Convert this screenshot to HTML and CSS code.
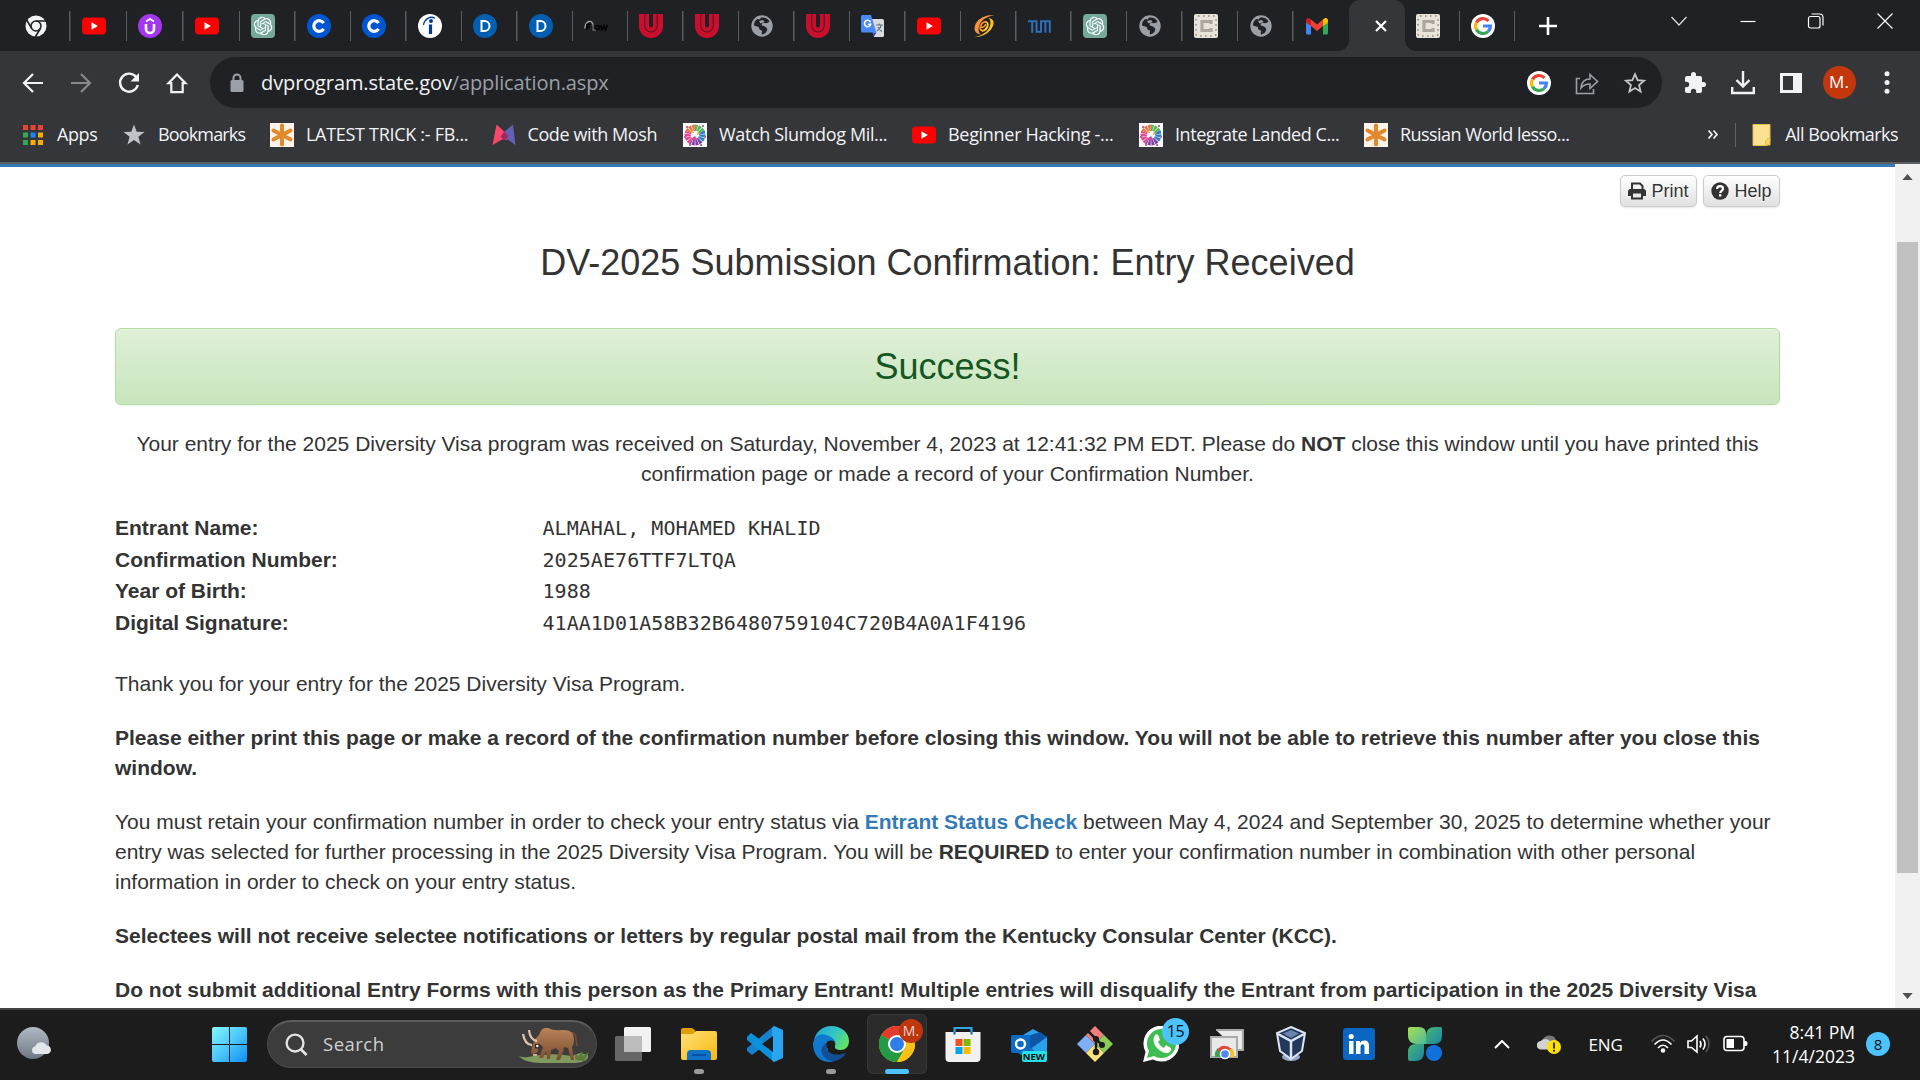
FILE: index.html
```html
<!DOCTYPE html>
<html lang="en">
<head>
<meta charset="utf-8">
<title>DV-2025 Submission Confirmation</title>
<link rel="stylesheet" href="styles.css">
</head>
<body>
<svg class="defs" width="0" height="0" aria-hidden="true">
  <defs>
    <linearGradient id="gWin" x1="0" y1="0" x2="1" y2="1"><stop offset="0" stop-color="#84f7ff"/><stop offset=".5" stop-color="#4cc7fb"/><stop offset="1" stop-color="#0f8ff5"/></linearGradient>
    <linearGradient id="gFold" x1="0" y1="0" x2="1" y2="1"><stop offset="0" stop-color="#ffdf7c"/><stop offset="1" stop-color="#f9b90c"/></linearGradient>
    <linearGradient id="gEdge" x1="0" y1="0" x2="1" y2=".5"><stop offset="0" stop-color="#1fa0dc"/><stop offset=".6" stop-color="#35c5c4"/><stop offset="1" stop-color="#5fe06a"/></linearGradient>
    <linearGradient id="gLeaf" x1="0" y1="0" x2="1" y2="1"><stop offset="0" stop-color="#a6e350"/><stop offset="1" stop-color="#4fb89c"/></linearGradient>
    <linearGradient id="gLeaf2" x1="0" y1="0" x2="1" y2="1"><stop offset="0" stop-color="#44b873"/><stop offset="1" stop-color="#1f83a5"/></linearGradient>
    <linearGradient id="gMoon" x1="0" y1="0" x2="0" y2="1"><stop offset="0" stop-color="#b0bac6"/><stop offset="1" stop-color="#6f7882"/></linearGradient>
    <linearGradient id="gBull" x1="0" y1="0" x2="0" y2="1"><stop offset="0" stop-color="#b9835a"/><stop offset="1" stop-color="#7c4c2e"/></linearGradient>
    <linearGradient id="gSwirl" x1="0" y1="0" x2="1" y2="0"><stop offset="0" stop-color="#ee7a35"/><stop offset="1" stop-color="#ffd21f"/></linearGradient>
  </defs>
  <symbol id="youtube" viewBox="0 0 24 24"><rect y="3.5" width="24" height="17" rx="4" fill="#f00"/><path d="M9.5 8.3v7.4l6.4-3.7z" fill="#fff"/></symbol>
  <symbol id="chromemono" viewBox="0 0 24 24"><circle cx="12" cy="12" r="10.500" fill="#f1f3f4"/><circle cx="12" cy="12" r="5" fill="none" stroke="#202124" stroke-width="1.500"/><path d="M12 7h10M7.700 14.500l-5-8.500M16.300 14.500l-5 8.500" stroke="#202124" stroke-width="1.600"/></symbol>
  <symbol id="udemy" viewBox="0 0 24 24"><circle cx="12" cy="12" r="12" fill="#a435f0"/><path d="M8 10v5a4 4 0 0 0 8 0v-5" fill="none" stroke="#fff" stroke-width="2.600"/><path d="M8 7.500l4-2.600 4 2.600" fill="none" stroke="#fff" stroke-width="1.800"/></symbol>
  <symbol id="gpt" viewBox="0 0 24 24"><rect width="24" height="24" rx="4" fill="#75a99c"/><path transform="translate(2.800 2.700) scale(.77)" fill="#fff" d="M22.2819 9.8211a5.9847 5.9847 0 0 0-.5157-4.9108 6.0462 6.0462 0 0 0-6.5098-2.9A6.0651 6.0651 0 0 0 4.9807 4.1818a5.9847 5.9847 0 0 0-3.9977 2.9 6.0462 6.0462 0 0 0 .7427 7.0966 5.98 5.98 0 0 0 .511 4.9107 6.051 6.051 0 0 0 6.5146 2.9001A5.9847 5.9847 0 0 0 13.2599 24a6.0557 6.0557 0 0 0 5.7718-4.2058 5.9894 5.9894 0 0 0 3.9977-2.9001 6.0557 6.0557 0 0 0-.7475-7.0729zm-9.022 12.6081a4.4755 4.4755 0 0 1-2.8764-1.0408l.1419-.0804 4.7783-2.7582a.7948.7948 0 0 0 .3927-.6813v-6.7369l2.02 1.1686a.071.071 0 0 1 .038.052v5.5826a4.504 4.504 0 0 1-4.4945 4.4944zm-9.6607-4.1254a4.4708 4.4708 0 0 1-.5346-3.0137l.142.0852 4.783 2.7582a.7712.7712 0 0 0 .7806 0l5.8428-3.3685v2.3324a.0804.0804 0 0 1-.0332.0615L9.74 19.9502a4.4992 4.4992 0 0 1-6.1408-1.6464zM2.3408 7.8956a4.485 4.485 0 0 1 2.3655-1.9728V11.6a.7664.7664 0 0 0 .3879.6765l5.8144 3.3543-2.0201 1.1685a.0757.0757 0 0 1-.071 0l-4.8303-2.7865A4.504 4.504 0 0 1 2.3408 7.872zm16.5963 3.8558L13.1038 8.364 15.1192 7.2a.0757.0757 0 0 1 .071 0l4.8303 2.7913a4.4944 4.4944 0 0 1-.6765 8.1042v-5.6772a.79.79 0 0 0-.407-.667zm2.0107-3.0231l-.142-.0852-4.7735-2.7818a.7759.7759 0 0 0-.7854 0L9.409 9.2297V6.8974a.0662.0662 0 0 1 .0284-.0615l4.8303-2.7866a4.4992 4.4992 0 0 1 6.6802 4.66zM8.3065 12.863l-2.02-1.1638a.0804.0804 0 0 1-.038-.0567V6.0742a4.4992 4.4992 0 0 1 7.3757-3.4537l-.142.0805L8.704 5.459a.7948.7948 0 0 0-.3927.6813zm1.0976-2.3654l2.602-1.4998 2.6069 1.4998v2.9994l-2.5974 1.4997-2.6067-1.4997Z"/></symbol>
  <symbol id="coursera" viewBox="0 0 24 24"><circle cx="12" cy="12" r="12" fill="#0056d2"/><path d="M16.600 9.200a5.300 5.300 0 1 0 0 5.600" fill="none" stroke="#fff" stroke-width="3.200"/></symbol>
  <symbol id="indeed" viewBox="0 0 24 24"><circle cx="12" cy="12" r="12" fill="#fff"/><path d="M12.500 10.500V20" stroke="#003a9b" stroke-width="3.200"/><circle cx="13" cy="7" r="2" fill="#003a9b"/><path d="M5.500 11C6.500 5 12 1.500 17 4.300" fill="none" stroke="#003a9b" stroke-width="1.300"/></symbol>
  <symbol id="dcircle" viewBox="0 0 24 24"><circle cx="12" cy="12" r="12" fill="#005fb0"/><path d="M8.500 7h3a5 5 0 0 1 0 10h-3z" fill="none" stroke="#fff" stroke-width="2"/></symbol>
  <symbol id="flow" viewBox="0 0 24 24"><path d="M.8 14.500C1.500 6 8.500 5 9 11.500" fill="none" stroke="#b5b5b5" stroke-width="1.200"/><path d="M3 16v-5.500h3.500M3 13h3" stroke="#050505" fill="none" stroke-width="1.600"/><path d="M9 9.500v6.500h3" stroke="#666" fill="none" stroke-width="1.300"/><circle cx="13.500" cy="13.500" r="2" fill="none" stroke="#050505" stroke-width="1.600"/><path d="M16.500 11l1.500 5 2-4.500 1.500 4.500 2-5" fill="none" stroke="#050505" stroke-width="1.600"/></symbol>
  <symbol id="ured" viewBox="0 0 24 24"><path d="M0 0h10v11.500a2 2 0 0 0 4 0V0h10v12a12 12 0 0 1-24 0z" fill="#c8102e"/><path d="M5.800 0v11.800a6.200 6.200 0 0 0 12.400 0V0" fill="none" stroke="#5d1220" stroke-width="1.100"/></symbol>
  <symbol id="globe" viewBox="0 0 24 24"><circle cx="12" cy="12" r="10.700" fill="#9aa0a6"/><path d="M11 3.600q6-.8 8.500 4-2 2.400-6 1.200-2.500.8-1.700 2.700 4.200.5 5.500 3.500-.5 4.500-5.300 5.500-.8-1.500.3-3.500l-3-1.700-.5-2.300-4.800-1.500q0-5 3.600-6.500l2.200.6z" fill="#202124"/><path d="M9 7l4-1 1.500 2-4 1.500z" fill="#9aa0a6"/></symbol>
  <symbol id="translate" viewBox="0 0 24 24"><path d="M10 5h11.500q1.500 0 1.500 1.500v15q0 1.500-1.500 1.500H13z" fill="#d8dbe0"/><path d="M11 18.500h4.500L13 22.500z" fill="#3a45c0"/><path d="M1.500 1H10l5.500 17.500h-14Q0 18.500 0 17V2.500Q0 1 1.500 1z" fill="#4a8af4"/><path d="M9.600 8.200a3.200 3.200 0 1 0 .2 2H7" fill="none" stroke="#fff" stroke-width="1.500"/><path d="M15 11h7M18.300 9.500V11m2 0q-1 4-4.300 6m1-4q1.500 3 4 4.500" fill="none" stroke="#65727e" stroke-width="1.200"/></symbol>
  <symbol id="swirl" viewBox="0 0 24 24"><path d="M22.500 1Q9 .5 3.800 9.500C1 15.500 3 20 8.500 20.200 4.800 17 7 9 11.500 5.500 15 3 18 2 22.500 1z" fill="#f4943a"/><path d="M1.500 23.200Q13 23 19 15.500c4.500-6 3-11-2.500-11.500 3.500 3 2 10-2 13.500-3.500 3-8 5-13 5.700z" fill="#ffbf1f"/><ellipse cx="12" cy="12.200" rx="3.200" ry="4.800" transform="rotate(32 12 12.200)" fill="#202124" stroke="url(#gSwirl)" stroke-width="2"/><path d="M9 13q3 1 5-3" fill="none" stroke="#f7a52c" stroke-width="1.600"/></symbol>
  <symbol id="tum" viewBox="0 0 24 24"><path d="M0 7.200h8.500v10.600h4.500V7.200h8.800v11.600M4.200 7v11.800M17.400 7v11.800" fill="none" stroke="#2f6fb7" stroke-width="2"/></symbol>
  <symbol id="crystal" viewBox="0 0 24 24"><rect width="24" height="24" rx="2" fill="#e9e4da"/><rect x="2" y="2" width="20" height="20" rx="2" fill="none" stroke="#918b80" stroke-width="1.600" stroke-dasharray="1.600 3.400"/><path d="M17 10V7.500H8v9h9V14" fill="none" stroke="#aca79d" stroke-width="3.200"/></symbol>
  <symbol id="gmail" viewBox="0 0 24 24"><path d="M1 6v13q0 1.500 1.500 1.500H6V10z" fill="#4285f4"/><path d="M23 6v13q0 1.500-1.500 1.500H18V10z" fill="#34a853"/><path d="M6 5.500l6 5 6-5V12l-6 5-6-5z" fill="#ea4335"/><path d="M1 6.500C1 3.500 4 3 6 5.500V12L1 8.500z" fill="#c5221f"/><path d="M23 6.500c0-3-3-3.500-5-1V12l5-3.500z" fill="#fbbc04"/></symbol>
  <symbol id="google" viewBox="0 0 24 24"><circle cx="12" cy="12" r="12" fill="#fff"/><g fill="none" stroke-width="3.200"><path d="M5.400 8.500A7.500 7.500 0 0 1 17.500 6.900" stroke="#ea4335"/><path d="M5.400 15.500a7.500 7.500 0 0 1 0-7" stroke="#fbbc05"/><path d="M17 17.600A7.500 7.500 0 0 1 5.400 15.500" stroke="#34a853"/><path d="M12 12h7.500a7.500 7.500 0 0 1-2.500 5.600" stroke="#4285f4"/></g></symbol>
  <symbol id="asterisk" viewBox="0 0 24 24"><rect width="24" height="24" fill="#fdf3e8"/><path d="M12 2.500v19M3.500 7.500l17 9M20.500 7.500l-17 9" stroke="#e2892c" stroke-width="4" stroke-linecap="round"/></symbol>
  <symbol id="mosh" viewBox="0 0 24 24"><path d="M4.500 1.500L15 11v6l-4-1L.5 22z" fill="#f7476b"/><path d="M21 1.500L11 10v7l4-1 8.500 6z" fill="#6361b5"/><path d="M12.500 8.500l4 5-4 4-4-4z" fill="#a02a5e"/></symbol>
  <symbol id="splash" viewBox="0 0 24 24"><rect width="24" height="24" fill="#fff"/><g fill="none" stroke-width="6.500" stroke-dasharray="2.300 .5"><path d="M5.500 9A7.200 7.200 0 0 1 12 4.800" stroke="#ee7445"/><path d="M12 4.800a7.200 7.200 0 0 1 6.500 4" stroke="#5bb65b"/><path d="M18.500 8.800A7.200 7.200 0 0 1 17 17.200" stroke="#2d80c8"/><path d="M17 17.200A7.200 7.200 0 0 1 8 18" stroke="#8241a2"/><path d="M8 18a7.200 7.200 0 0 1-2.500-9" stroke="#e7418f"/></g><path d="M9 8l3 1 3-1-1 3 3 2-4 .5-1 3-1.500-3.500-3 1.500z" fill="#fff"/><path d="M7 9l3-2 1 3zM15 8l2 3-3 1z" fill="#e9a13b"/><path d="M9 15l3-2 2 3-3 2z" fill="#c94a9f"/><path d="M3 3h2v2H3zm16-1h2v2h-2zM1 13h2v2H1zm20 0h2v2h-2zM6 21h2v2H6zm11 0h2v2h-2z" fill="#c569a4"/></symbol>
  <symbol id="chrome" viewBox="0 0 36 36"><circle cx="18" cy="18" r="18" fill="#fbc116"/><path d="M18 18L2.400 9A18 18 0 0 1 33.600 9z" fill="#e33b2e"/><path d="M18 18L2.400 9A18 18 0 0 0 18 36l7.800-13.500z" fill="#229a46"/><path d="M18 9h15.600a18 18 0 0 1-15.600 27l8-14z" fill="#fbc116"/><circle cx="18" cy="18" r="9" fill="#fff"/><circle cx="18" cy="18" r="7" fill="#2f7de9"/></symbol>
</svg>

<header class="browser">
  <div class="tabstrip">
    <div class="tabs">
      <div class="tab first"><svg><use href="#chromemono"/></svg></div>
      <div class="tab"><svg><use href="#youtube"/></svg></div>
      <div class="tab"><svg><use href="#udemy"/></svg></div>
      <div class="tab"><svg><use href="#youtube"/></svg></div>
      <div class="tab"><svg><use href="#gpt"/></svg></div>
      <div class="tab"><svg><use href="#coursera"/></svg></div>
      <div class="tab"><svg><use href="#coursera"/></svg></div>
      <div class="tab"><svg><use href="#indeed"/></svg></div>
      <div class="tab"><svg><use href="#dcircle"/></svg></div>
      <div class="tab"><svg><use href="#dcircle"/></svg></div>
      <div class="tab"><svg><use href="#flow"/></svg></div>
      <div class="tab"><svg><use href="#ured"/></svg></div>
      <div class="tab"><svg><use href="#ured"/></svg></div>
      <div class="tab"><svg><use href="#globe"/></svg></div>
      <div class="tab"><svg><use href="#ured"/></svg></div>
      <div class="tab"><svg><use href="#translate"/></svg></div>
      <div class="tab"><svg><use href="#youtube"/></svg></div>
      <div class="tab"><svg><use href="#swirl"/></svg></div>
      <div class="tab"><svg><use href="#tum"/></svg></div>
      <div class="tab"><svg><use href="#gpt"/></svg></div>
      <div class="tab"><svg><use href="#globe"/></svg></div>
      <div class="tab"><svg><use href="#crystal"/></svg></div>
      <div class="tab"><svg><use href="#globe"/></svg></div>
      <div class="tab before"><svg><use href="#gmail"/></svg></div>
      <div class="tab active"><svg viewBox="0 0 24 24"><path d="M7 7l10 10M17 7L7 17" stroke="#fff" stroke-width="2.200"/></svg></div>
      <div class="tab"><svg><use href="#crystal"/></svg></div>
      <div class="tab"><svg><use href="#google"/></svg></div>
    </div>
    <svg class="newtab" viewBox="0 0 24 24"><path d="M12 3v18M3 12h18" stroke="#fff" stroke-width="2.600"/></svg>
    <div class="winctl">
      <svg viewBox="0 0 24 24"><path d="M4.500 8l7.500 8 7.500-8" fill="none" stroke="#ddd" stroke-width="1.200"/></svg>
      <svg viewBox="0 0 24 24"><path d="M4.500 12.500h15" stroke="#fff" stroke-width="1.200"/></svg>
      <svg viewBox="0 0 24 24"><rect x="4.500" y="7.500" width="11.500" height="11.500" rx="2" fill="none" stroke="#fff" stroke-width="1.200"/><path d="M7.500 5h8q3.500 0 3.500 3.500v8" fill="none" stroke="#fff" stroke-width="1.200"/></svg>
      <svg viewBox="0 0 24 24"><path d="M4.500 4.500l15 15M19.500 4.500l-15 15" stroke="#fff" stroke-width="1.200"/></svg>
    </div>
  </div>
  <div class="toolbar">
    <div class="nav">
      <svg viewBox="0 0 24 24"><path d="M22 12H3.500M12 3l-9 9 9 9" fill="none" stroke="#f1f3f4" stroke-width="2.200"/></svg>
      <svg viewBox="0 0 24 24"><path d="M2 12h18.500M12 3l9 9-9 9" fill="none" stroke="#87898d" stroke-width="2.200"/></svg>
      <svg viewBox="0 0 24 24"><path d="M19.500 6.500A9 9 0 1 0 20.800 14" fill="none" stroke="#f1f3f4" stroke-width="2.400"/><path d="M22 2v8.500h-8.500z" fill="#f1f3f4"/></svg>
      <svg viewBox="0 0 24 24"><path d="M12 3.500l-8.500 8.700h2.800v9h11.400v-9h2.800z" fill="none" stroke="#f1f3f4" stroke-width="2.200"/></svg>
    </div>
    <div class="omnibox">
      <svg class="lock" viewBox="0 0 16 20"><rect x="1.500" y="7" width="13" height="12" rx="1.500" fill="#9aa0a6"/><path d="M4.500 8V5a3.500 3.500 0 0 1 7 0v3" fill="none" stroke="#9aa0a6" stroke-width="2"/></svg>
      <div class="url">dvprogram.state.gov<span>/application.aspx</span></div>
      <div class="omniicons">
        <svg><use href="#google"/></svg>
        <svg viewBox="0 0 24 24"><path d="M5 7.500H1.500v15h17v-4.500" fill="none" stroke="#9aa0a6" stroke-width="1.600"/><path d="M6 17c.5-6 4-9 9-9V3.500l7.500 7-7.500 7V13c-4 0-6.500 1-9 4z" fill="none" stroke="#9aa0a6" stroke-width="1.600"/></svg>
        <svg viewBox="0 0 24 24"><path d="M12 3.200l2.600 6 6.500.6-5 4.300 1.500 6.400L12 17.100l-5.600 3.400L7.900 14.100l-5-4.300 6.500-.6z" fill="none" stroke="#c4c7cb" stroke-width="1.800"/></svg>
      </div>
    </div>
    <div class="actions">
      <svg viewBox="0 0 24 24"><path d="M20.500 11H19V7a2 2 0 0 0-2-2h-4V3.500a2.500 2.500 0 0 0-5 0V5H4a2 2 0 0 0-2 2v3.800h1.500a2.700 2.700 0 0 1 0 5.400H2V20a2 2 0 0 0 2 2h3.800v-1.500a2.700 2.700 0 0 1 5.400 0V22H17a2 2 0 0 0 2-2v-4h1.500a2.500 2.500 0 0 0 0-5z" fill="#f1f3f4"/></svg>
      <svg viewBox="0 0 24 24"><path d="M12 0v15M5.500 9l6.500 6.500L18.500 9M1.200 16v6h21.600v-6" fill="none" stroke="#f1f3f4" stroke-width="2.400"/></svg>
      <svg viewBox="0 0 24 24"><path d="M1 2h22v20H1zM4 5v14h10V5z" fill="#f1f3f4" fill-rule="evenodd"/></svg>
      <span class="avatar">M.</span>
      <svg viewBox="0 0 24 24"><g fill="#f1f3f4"><circle cx="12" cy="2.800" r="2.500"/><circle cx="12" cy="11.500" r="2.500"/><circle cx="12" cy="20.200" r="2.500"/></g></svg>
    </div>
  </div>
  <div class="bookmarks">
    <div class="bm apps"><svg viewBox="0 0 24 24"><path d="M2 2h5v5H2zm7.500 0h5v5h-5zM17 2h5v5h-5z" fill="#ea4335"/><path d="M2 9.500h5v5H2zM2 17h5v5H2z" fill="#34a853"/><path d="M9.500 9.500h5v5h-5z" fill="#1a85ff"/><path d="M17 9.500h5v5h-5zM9.500 17h5v5h-5zM17 17h5v5h-5z" fill="#fbab05"/></svg><span>Apps</span></div>
    <div class="bm marks"><svg viewBox="0 0 24 24"><path d="M12 1.500l2.700 7.200 7.800.3-6.100 4.800 2.100 7.700L12 17.100l-6.500 4.400 2.100-7.700L1.500 9l7.800-.3z" fill="#bfc2c7"/></svg><span>Bookmarks</span></div>
    <div class="bm latest"><svg><use href="#asterisk"/></svg><span>LATEST TRICK :- FB...</span></div>
    <div class="bm code"><svg><use href="#mosh"/></svg><span>Code with Mosh</span></div>
    <div class="bm watch"><svg><use href="#splash"/></svg><span>Watch Slumdog Mil...</span></div>
    <div class="bm hack"><svg><use href="#youtube"/></svg><span>Beginner Hacking -...</span></div>
    <div class="bm landed"><svg><use href="#splash"/></svg><span>Integrate Landed C...</span></div>
    <div class="bm russian"><svg><use href="#asterisk"/></svg><span>Russian World lesso...</span></div>
    <div class="bm-end">
      <svg class="more" viewBox="0 0 12 12"><path d="M1.500 1.500L5 5.500 1.500 9.500M6.500 1.500L10 5.500 6.500 9.500" fill="none" stroke="#f1f3f4" stroke-width="1.700"/></svg>
      <i class="divider"></i>
      <svg class="folder" viewBox="0 0 20 24"><path d="M1 1.500h17V17l-3 5.500H1z" fill="#fde293" stroke="#e3bf4e"/><path d="M18 15.500v6.500h-4.500v-4q2 0 2-2.500z" fill="#fcd462" stroke="#e3bf4e"/></svg>
      <span>All Bookmarks</span>
    </div>
  </div>
</header>

<div class="viewport">
  <main class="page">
    <div class="container">
      <div class="buttons">
        <button class="btn"><svg viewBox="0 0 18 18"><path d="M4 8V1.500h8l2.500 2.500V8" fill="none" stroke="#333" stroke-width="2"/><path d="M0 9.500Q0 7 2.500 7h13Q18 7 18 9.500V14h-3v-2.500H3V14H0z" fill="#333"/><path d="M4 11v5.500h10V11" fill="none" stroke="#333" stroke-width="2"/></svg>Print</button>
        <button class="btn"><svg viewBox="0 0 18 18"><circle cx="9" cy="9" r="8.700" fill="#333"/><path d="M6 6.800C6.400 3.200 12 3.400 12 6.800c0 2-2.800 2-2.800 4.200" fill="none" stroke="#fff" stroke-width="2.200"/><path d="M8 12.200h2.400v2.300H8z" fill="#fff"/></svg>Help</button>
      </div>
      <h1>DV-2025 Submission Confirmation: Entry Received</h1>
      <div class="alert">Success!</div>
      <p class="lead">Your entry for the 2025 Diversity Visa program was received on Saturday, November 4, 2023 at 12:41:32 PM EDT. Please do <b>NOT</b> close this window until you have printed this<br>confirmation page or made a record of your Confirmation Number.</p>
      <dl class="details">
        <dt>Entrant Name:</dt><dd>ALMAHAL, MOHAMED KHALID</dd>
        <dt>Confirmation Number:</dt><dd>2025AE76TTF7LTQA</dd>
        <dt>Year of Birth:</dt><dd>1988</dd>
        <dt>Digital Signature:</dt><dd>41AA1D01A58B32B6480759104C720B4A0A1F4196</dd>
      </dl>
      <p>Thank you for your entry for the 2025 Diversity Visa Program.</p>
      <p><b>Please either print this page or make a record of the confirmation number before closing this window. You will not be able to retrieve this number after you close this<br>window.</b></p>
      <p>You must retain your confirmation number in order to check your entry status via <a href="#">Entrant Status Check</a> between May 4, 2024 and September 30, 2025 to determine whether your<br>entry was selected for further processing in the 2025 Diversity Visa Program. You will be <b>REQUIRED</b> to enter your confirmation number in combination with other personal<br>information in order to check on your entry status.</p>
      <p><b>Selectees will not receive selectee notifications or letters by regular postal mail from the Kentucky Consular Center (KCC).</b></p>
      <p><b>Do not submit additional Entry Forms with this person as the Primary Entrant! Multiple entries will disqualify the Entrant from participation in the 2025 Diversity Visa</b></p>
    </div>
  </main>
  <aside class="scrollbar">
    <svg viewBox="0 0 12 7"><path d="M0 7l6-7 6 7z" fill="#505050"/></svg>
    <div class="thumb"></div>
    <svg class="down" viewBox="0 0 12 7"><path d="M0 0l6 7 6-7z" fill="#505050"/></svg>
  </aside>
</div>

<footer class="taskbar">
  <svg class="weather" viewBox="0 0 36 36"><circle cx="17" cy="17" r="16" fill="url(#gMoon)"/><path d="M19 28a4 4 0 0 1 .5-7.800 6 6 0 0 1 11-.7A4.300 4.300 0 0 1 31.500 28z" fill="#e3e7ec"/></svg>
  <svg class="start" viewBox="0 0 35 35"><path d="M2 0h15v17H0V2q0-2 2-2zM18 0h15q2 0 2 2v15H18zM0 18h17v17H2q-2 0-2-2zM18 18h17v15q0 2-2 2H18z" fill="url(#gWin)"/></svg>
  <div class="search">
    <svg class="lens" viewBox="0 0 24 24"><circle cx="10.500" cy="10.500" r="8.800" fill="none" stroke="#e4e4e4" stroke-width="2.400"/><path d="M16.500 17l6 6" stroke="#e4e4e4" stroke-width="2.800"/></svg>
    <span>Search</span>
    <svg class="bull" viewBox="0 0 70 36">
      <path d="M0 29q5 2 9 1 22-5 44-1l8-3 8 2q1 4-4 6-4 2-12 2H22Q5 36 0 29z" fill="#7f9a5c"/>
      <path d="M56 31q1-8 3-1l4-6 1 5 6-4-5 9-8-1z" fill="#5d7c3c"/>
      <path d="M51 6q6-1 6 6l1 7" fill="none" stroke="#7a4d30" stroke-width="1.600"/>
      <path d="M20 8Q23-1 29 1q6 3 14 2 12-1 12 9 0 5-2 8l2 13h-3l-3-12-4-1-1 5-3 8h-4l3-9-3-3-5 2-1 9h-3l-1-8-3 7h-4l4-11q-3-2-4-4l-1 8q-3 5-7 2l1-6 3-8z" fill="url(#gBull)"/>
      <path d="M13 18Q6 18 4 7M18 14Q11 13 10 3" fill="none" stroke="#dcc4ae" stroke-width="2.300"/>
      <path d="M16 17h4.500v4.500H16z" fill="#332723"/><circle cx="18.300" cy="19" r="1.200" fill="#fff"/>
      <path d="M14 28h4" stroke="#dba492" stroke-width="2"/>
    </svg>
  </div>
  <div class="apps-row">
    <div class="app"><svg viewBox="0 0 36 36"><rect x="9" y="1" width="27" height="25" rx="1.500" fill="#f2f2f2"/><path d="M1.500 10H9v16h18v7.500q0 1.500-1.500 1.500h-24Q0 35 0 33.500v-22Q0 10 1.500 10z" fill="#666"/><path d="M9 10h18v16H9z" fill="#bcbcbc"/></svg></div>
    <div class="app running"><svg viewBox="0 0 36 36"><path d="M0 4q0-2 2-2h9l4 3h-1v8H0z" fill="#e09f04"/><path d="M0 8h12l3-3h19q2 0 2 2v25q0 2-2 2H2q-2 0-2-2z" fill="url(#gFold)"/><path d="M6 34V28q0-4 4-4h16q4 0 4 4v6z" fill="#0f72ca"/><path d="M11 29h14" stroke="#0a4f97" stroke-width="2"/></svg></div>
    <div class="app"><svg viewBox="0 0 36 36"><path d="M27 0v12L5 29 0 25v-3z" fill="#1681cc"/><path d="M0 14v-3l4-4 23 17v12z" fill="#0b91dc"/><path d="M27 0l9 4v28l-9 4-2-2V2z" fill="#27a5f0"/><path d="M26 10v16L15 18z" fill="#1c1c1c"/></svg></div>
    <div class="app running"><svg viewBox="0 0 36 36"><path d="M1 14a17.500 17.500 0 0 1 17-14c11 0 18 7 18 15 0 6-4 9-8 9-5 0-7-2-6-4 3-9-14-14-21-6z" fill="url(#gEdge)"/><path d="M0 18C1 9 9 7 13 9c7 2 10 6 9 10-7-6-12 10 0 16-13 4-22-5-22-17z" fill="#1078cf"/><path d="M14 17c-3 7 4 15 19 10C29 34 18 39 11 31c-5-6-2-12 3-14z" fill="#144f94"/><path d="M15 15q-3 3-1 7l4 3q2 2 5 0-2-2-1-5 1-7-7-5z" fill="#1c1c1c"/></svg></div>
    <div class="app current"><svg><use href="#chrome"/></svg><span class="badge profile">M.</span></div>
    <div class="app"><svg viewBox="0 0 36 36"><path d="M9.500 8V2h17v6" fill="none" stroke="#2fa6dd" stroke-width="2.200"/><path d="M.5 6h35v26q0 4-4 4h-27q-4 0-4-4z" fill="#f1f1f1"/><path d="M10.500 13h7v7h-7z" fill="#f25022"/><path d="M18.500 13h7v7h-7z" fill="#7fba00"/><path d="M10.500 21h7v7h-7z" fill="#00a4ef"/><path d="M18.500 21h7v7h-7z" fill="#ffb900"/><path d="M9.500 6v2.500M26.500 6v2.500" stroke="#1d6fa0" stroke-width="2.200"/></svg></div>
    <div class="app"><svg viewBox="0 0 36 36"><path d="M7 12L22 3l14 8v17H11z" fill="#28a1e9"/><path d="M11 12L29 6l7 5-18 13z" fill="#0e55a8"/><path d="M7 13v14l10 6 6-9z" fill="#1b6cc0"/><rect y="9" width="19" height="18" rx="2" fill="#0b6cc6"/><circle cx="9.500" cy="18" r="4.500" fill="none" stroke="#fff" stroke-width="2.400"/><rect x="11" y="25" width="25" height="11" rx="2" fill="#25e0e4"/></svg><b class="newtag">NEW</b></div>
    <div class="app"><svg viewBox="0 0 36 36"><path d="M18 0l9 9-9 9-9-9z" fill="#f37f7d"/><path d="M9 9l9 9-9 9-9-9z" fill="#80aef7"/><path d="M27 9l9 9-9 9-9-9z" fill="#8dcb58"/><path d="M18 18l9 9-9 9-9-9z" fill="#fce07a"/><path d="M11 5l8 8v14M19 13l6 6" fill="none" stroke="#1c1c1c" stroke-width="2.500"/><g fill="#1c1c1c"><circle cx="19" cy="13" r="3"/><circle cx="19" cy="26" r="3.200"/><circle cx="25" cy="19" r="3"/></g></svg></div>
    <div class="app"><svg viewBox="0 0 36 36"><path d="M0 36l2.500-10A18 18 0 1 1 10 33.500z" fill="#fff"/><path d="M4 32l2-7a14.500 14.500 0 1 1 5 5z" fill="#3dbd52"/><path d="M12 9q3-2 4 2l1 3-2 2q2 4 6 6l2-3 5 3q1 3-3 5-5 1-11-5-6-7-2-13z" fill="#fff"/></svg><span class="badge count">15</span></div>
    <div class="app"><svg viewBox="0 0 36 36"><path d="M7 4h27v20h-6" fill="#ececec" stroke="#a7a7a7" stroke-width="2"/><rect x="2" y="11" width="26" height="20" fill="#e9e9e9" stroke="#aaa" stroke-width="2"/><path d="M6 31a9.500 9.500 0 0 1 3-9l7 9z" fill="#3aa554"/><path d="M8 24q6-8 15-1l-7 5z" fill="#df483c"/><path d="M17 24l7-1q2 4 1 8h-8z" fill="#f6c12d"/><circle cx="16" cy="28" r="4.500" fill="#4c8bef" stroke="#fff" stroke-width="1.500"/></svg></div>
    <div class="app vbox"><svg viewBox="0 0 36 36"><ellipse cx="18" cy="31" rx="9" ry="4" fill="#96a6cb"/><path d="M18 1l14 6-3 18-11 8-11-8L4 7z" fill="#23395b" stroke="#dce5f5" stroke-width="2"/><path d="M5 8l13 7 13-7M18 15v17" fill="none" stroke="#dce5f5" stroke-width="2.500"/><path d="M18 4l8 3.500L18 12l-8-4.500z" fill="#6b83ae"/></svg></div>
    <div class="app"><svg viewBox="0 0 36 36"><rect x="2" y="2" width="32" height="32" rx="3" fill="#0a66c2"/><path d="M8 15h4.500v13H8zM15 15h4v2q1-2.400 4.500-2.400 4.500 0 4.500 5.400v8h-4.500v-7.300q0-2.400-1.900-2.400-2.100 0-2.100 2.600V28H15z" fill="#fff"/><circle cx="10.200" cy="10.500" r="2.600" fill="#fff"/></svg></div>
    <div class="app"><svg viewBox="0 0 36 36"><path d="M1 3q0-2 2-2h9q7 0 7 7v10H9q-8-1-8-8z" fill="url(#gLeaf)"/><path d="M19 10q0-9 9-9h6q1 0 1 2v7q0 8-8 8h-8z" fill="url(#gLeaf2)"/><path d="M1 26q0-8 8-8h8v8q0 9-9 9H3q-2 0-2-2z" fill="url(#gLeaf2)"/><circle cx="27" cy="27" r="8" fill="#1272dc"/></svg></div>
  </div>
  <div class="tray">
    <svg class="chev" viewBox="0 0 16 9"><path d="M1 8l7-7 7 7" fill="none" stroke="#fff" stroke-width="2"/></svg>
    <svg class="cloud" viewBox="0 0 24 20"><path d="M4 12a4.500 4.500 0 0 1 2-7A7 6 0 0 1 18 4q3 4 0 8z" fill="#777"/><path d="M4 15.500a4 4 0 0 1 0-8.500 6 6 0 0 1 9 0l4 8.500z" fill="#d2d2d2"/><circle cx="17" cy="13" r="7" fill="#ffe100"/><path d="M17 8.500v6M17 15.800v2" stroke="#222" stroke-width="1.800"/></svg>
    <span class="lang">ENG</span>
    <svg class="wifi" viewBox="0 0 24 20"><g fill="none" stroke="#fff" stroke-width="1.700"><path d="M.5 7.500q11.500-12 23 0" stroke="#555"/><path d="M3.500 10.500q8.500-9 17 0M7 14q5-5.500 10 0"/></g><circle cx="12" cy="16.500" r="2.300" fill="#fff"/></svg>
    <svg class="vol" viewBox="0 0 24 20"><g fill="none" stroke="#fff" stroke-width="1.600"><path d="M1 7v6.500h3.500L10 18V2L4.500 7z"/><path d="M13 7q2 3 0 6.500M16 4.500q4 5.500 0 11"/><path d="M19 2q6 8 0 16" stroke="#555"/></g></svg>
    <svg class="bat" viewBox="0 0 25 18"><rect x="1" y="1.500" width="20" height="14" rx="3" fill="none" stroke="#fff" stroke-width="1.600"/><rect x="3.500" y="4" width="7.500" height="9" fill="#fff"/><path d="M21 6h2q1.500 0 1.500 2.500T23 11h-2z" fill="#fff"/></svg>
    <div class="clock"><div>8:41 PM</div><div>11/4/2023</div></div>
    <span class="notif">8</span>
  </div>
</footer>
</body>
</html>
```
FILE: styles.css
```css
* { box-sizing: border-box; }
body {
  margin: 0;
  width: 1920px;
  height: 1080px;
  overflow: hidden;
  display: flex;
  flex-direction: column;
  background: #fff;
  font-family: "Liberation Sans", Arial, sans-serif;
}
svg { display: block; flex: none; width: 24px; height: 24px; }
.defs { position: absolute; width: 0; height: 0; }

/* Browser chrome */
.browser {
  flex: none;
  height: 164px;
  background: #35363a;
  border-bottom: 2px solid #5b5e62;
  font-family: "Open Sans", "Noto Sans", sans-serif;
  color: #f1f3f4;
}
.tabstrip { height: 51px; display: flex; background: #202124; }
.tabs { display: flex; padding-left: 15px; }
.tab {
  width: 55.45px;
  height: 51px;
  padding-left: 11px;
  display: flex;
  align-items: center;
  background: linear-gradient(#5a5c60, #5a5c60) right 11px / 1.5px 30px no-repeat;
}
.tab:nth-child(-n+4) { width: 56.6px; }
.tab.first { width: 55.6px; padding-left: 9px; }
.tab.before { background: none; }
.tab.active {
  padding-left: 20px;
  border-radius: 11px 11px 0 0;
  background: #35363a;
  position: relative;
}
.tab.active::before, .tab.active::after {
  content: "";
  position: absolute;
  bottom: 0;
  width: 10px;
  height: 10px;
}
.tab.active::before { left: -10px; background: radial-gradient(circle at 0 0, #202124 9.5px, #35363a 10px); }
.tab.active::after { right: -10px; background: radial-gradient(circle at 100% 0, #202124 9.5px, #35363a 10px); }
.newtab { margin: 14px 0 0 21px; width: 24px; height: 24px; }
.winctl { margin-left: auto; padding: 9px 23px 0 0; display: flex; gap: 44.7px; }

.toolbar { height: 63px; padding-top: 6px; display: flex; align-items: flex-start; }
.nav { width: 210px; height: 51px; padding-left: 21px; display: flex; align-items: center; gap: 24px; }
.omnibox {
  width: 1452px;
  height: 51px;
  padding: 0 15px 0 19px;
  border-radius: 26px;
  display: flex;
  align-items: center;
  background: #202124;
}
.lock { width: 16px; height: 20px; }
.url { margin: -1px 0 0 16px; font-size: 20px; letter-spacing: -.11px; }
.url span { color: #9aa0a6; }
.omniicons { margin-left: auto; display: flex; gap: 24px; }
.actions { height: 51px; margin-left: 21px; display: flex; align-items: center; gap: 24px; }
.avatar {
  width: 33px;
  height: 33px;
  margin: 0 -4.5px;
  border-radius: 50%;
  background: #c2370c;
  color: #fff;
  font-size: 17px;
  line-height: 32px;
  text-align: center;
}

.bookmarks { height: 42px; display: flex; align-items: center; font-size: 18px; }
.bm { display: flex; align-items: center; gap: 12px; white-space: nowrap; letter-spacing: -.4px; }
.bm-end span { letter-spacing: -.55px; }
.bookmarks span { margin-top: -2px; }
.bm.apps { width: 101px; padding-left: 21px; }
.bm.marks { width: 148px; margin-left: 21px; letter-spacing: -.85px; }
.bm.latest { width: 221.5px; letter-spacing: -.3px; }
.bm.code { width: 191.5px; }
.bm.watch { width: 229px; letter-spacing: -.35px; }
.bm.hack { width: 227px; letter-spacing: -.3px; }
.bm.landed { width: 225px; letter-spacing: -.45px; }
.bm.russian { width: 210px; letter-spacing: -.55px; }
.bm-end { margin-left: auto; padding-right: 22px; display: flex; align-items: center; white-space: nowrap; }
.more { width: 12px; height: 12px; }
.divider { width: 1.5px; height: 24px; margin: 0 16px 0 15.5px; background: #5f6368; }
.folder { width: 20px; height: 24px; margin-right: 13px; }

/* Page */
.viewport { flex: none; height: 844px; display: flex; overflow: hidden; }
.page { width: 1895px; height: 844px; border-top: 3px solid #337ab7; overflow: hidden; }
.container { width: 1665px; margin-left: 115px; color: #333; font-size: 21px; line-height: 30px; white-space: nowrap; }
.buttons { display: flex; justify-content: flex-end; gap: 6px; padding-top: 8px; }
.btn {
  height: 32px;
  width: 77px;
  padding: 0;
  border: 1px solid #ccc;
  border-radius: 5px;
  display: flex;
  align-items: center;
  justify-content: center;
  gap: 5px;
  background: linear-gradient(#fff, #e0e0e0);
  box-shadow: 0 1px 2px rgba(0, 0, 0, .1);
  color: #333;
  font: 18px "Liberation Sans", Arial, sans-serif;
  text-shadow: 0 1px 0 #fff;
}
.btn svg { width: 18px; height: 18px; }
h1 { margin: 36px 0 46px; font-size: 36px; line-height: 39px; font-weight: 400; text-align: center; }
.alert {
  height: 77px;
  border: 1px solid #b2dba1;
  border-radius: 6px;
  background: linear-gradient(#dff0d8, #c8e5bc);
  box-shadow: inset 0 1px 0 rgba(255, 255, 255, .25), 0 1px 2px rgba(0, 0, 0, .05);
  color: #155724;
  font-size: 36px;
  line-height: 76px;
  text-align: center;
}
p { margin: 0 0 24px; }
.lead { margin: 24px 0 24px; text-align: center; }
.details { margin: 0 0 30px; display: grid; grid-template-columns: 427.5px 1fr; grid-auto-rows: 31.5px; line-height: 31.5px; }
dt { font-weight: 700; line-height: 29.5px; }
dd { margin: 0; font-family: "DejaVu Sans Mono", monospace; font-size: 20px; letter-spacing: .05px; }
a { color: #337ab7; font-weight: 700; text-decoration: none; }

.scrollbar { width: 25px; background: #f1f1f1; display: flex; flex-direction: column; align-items: center; padding: 10px 0 9px; }
.scrollbar svg { width: 11px; height: 6px; }
.thumb { width: 21px; height: 631px; margin-top: 62px; background: #c1c1c1; }
.down { margin-top: auto; }

/* Taskbar */
.taskbar {
  flex: none;
  height: 72px;
  padding-bottom: 2px;
  border-top: 2px solid #434343;
  background: #1c1c1c;
  color: #fff;
  display: flex;
  align-items: center;
  font-family: "Open Sans", "Noto Sans", sans-serif;
}
.weather { width: 36px; height: 36px; margin-left: 16px; }
.start { width: 35px; height: 35px; margin-left: 160px; }
.search {
  width: 330px;
  height: 48px;
  margin-left: 20px;
  padding: 0 7px 0 17px;
  border: 1px solid #4b4b4b;
  border-top: 2px solid #5c5c5c;
  border-radius: 24px;
  background: #3c3c3c;
  display: flex;
  align-items: center;
}
.lens { width: 23px; height: 23px; }
.search span { margin: -2px 0 0 15px; font-size: 18.5px; letter-spacing: .5px; color: #d0d0d0; }
.bull { width: 70px; height: 36px; margin-left: auto; }
.apps-row { display: flex; margin-left: 6px; gap: 6px; }
.app {
  width: 60px;
  height: 60px;
  position: relative;
  display: flex;
  align-items: center;
  justify-content: center;
}
.app svg { width: 36px; height: 36px; }
.vbox { padding-right: 5px; }
.running::after, .current::after {
  content: "";
  position: absolute;
  left: 25px;
  bottom: 0;
  width: 10px;
  height: 5px;
  border-radius: 3px;
  background: #9a9a9a;
}
.current { border-radius: 6px; background: #2b2b2b; box-shadow: inset 0 0 0 1px #363636; }
.current::after { left: 18px; width: 24px; background: #4cc2ff; }
.badge { position: absolute; border-radius: 50%; text-align: center; }
.profile { right: 4px; top: 5px; width: 24px; height: 24px; background: #bf360c; color: #e8d4cd; font-size: 14px; line-height: 24px; }
.count { right: 2px; top: 4px; width: 27px; height: 27px; background: #4cc2ff; color: #111; font-size: 16px; line-height: 26px; letter-spacing: -.5px; }
.newtag { position: absolute; right: 14px; bottom: 12px; font-size: 9.5px; line-height: 11px; color: #111; }
.tray { margin-left: auto; padding-right: 30px; display: flex; align-items: center; }
.chev { width: 16px; height: 9px; }
.cloud { width: 24px; height: 20px; margin-left: 27px; }
.lang { width: 34px; margin-left: 28px; font-size: 17px; letter-spacing: -.1px; }
.wifi { width: 24px; height: 20px; margin-left: 28.5px; }
.vol { width: 24px; height: 20px; margin-left: 12px; }
.bat { width: 25px; height: 18px; margin-left: 12px; }
.clock { width: 107px; margin-top: -1px; font-size: 17.5px; line-height: 24px; letter-spacing: 0; text-align: right; white-space: nowrap; }
.notif { width: 24px; height: 24px; margin-left: 11px; border-radius: 50%; background: #4cc2ff; color: #111; font-size: 15px; line-height: 24px; text-align: center; }
```
